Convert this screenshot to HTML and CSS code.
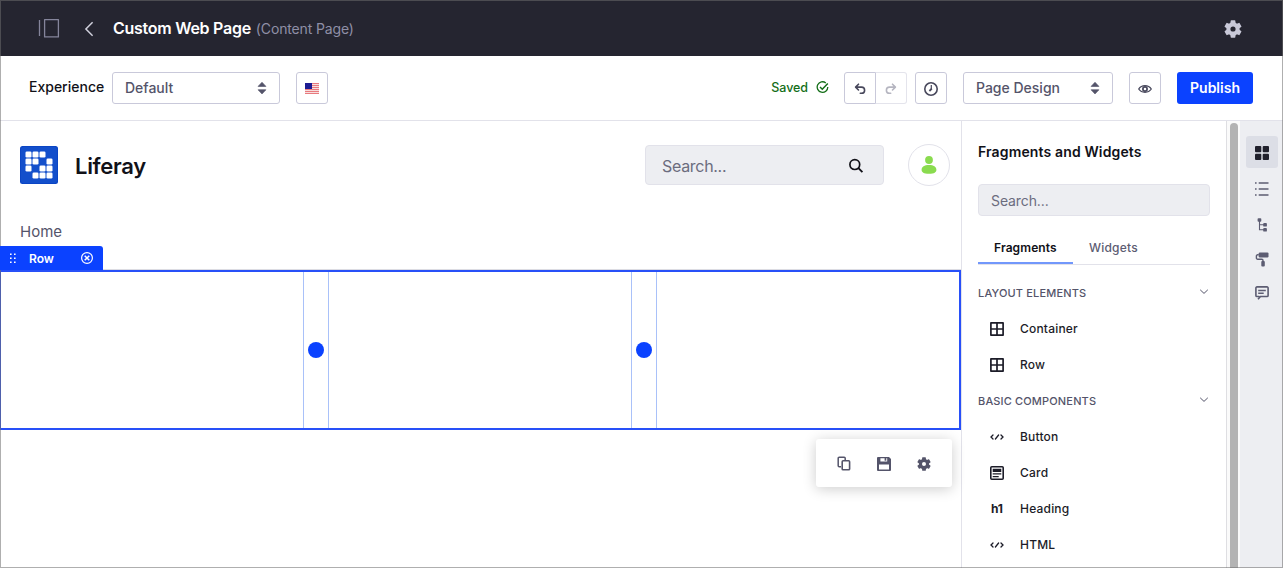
FILE: index.html
```html
<!DOCTYPE html>
<html lang="en">
<head>
<meta charset="utf-8">
<title>Custom Web Page</title>
<link rel="stylesheet" href="styles.css">
</head>
<body>
<svg class="defs" aria-hidden="true">
  <symbol id="gear" viewBox="0 0 16 16">
    <circle cx="8" cy="8" r="4.1" fill="none" stroke="currentColor" stroke-width="3.6"/>
    <g fill="currentColor">
      <path d="M6.500.3h3a.6.6 0 0 1 .6.6l.3 3H5.600l.3-3a.6.6 0 0 1 .6-.6zM6.500 15.700h3a.6.6 0 0 0 .6-.6l.3-3H5.600l.3 3a.6.6 0 0 0 .6.6z"/>
      <path d="M6.500.3h3a.6.6 0 0 1 .6.6l.3 3H5.600l.3-3a.6.6 0 0 1 .6-.6zM6.500 15.700h3a.6.6 0 0 0 .6-.6l.3-3H5.600l.3 3a.6.6 0 0 0 .6.6z" transform="rotate(60 8 8)"/>
      <path d="M6.500.3h3a.6.6 0 0 1 .6.6l.3 3H5.600l.3-3a.6.6 0 0 1 .6-.6zM6.500 15.700h3a.6.6 0 0 0 .6-.6l.3-3H5.600l.3 3a.6.6 0 0 0 .6.6z" transform="rotate(120 8 8)"/>
    </g>
  </symbol>
  <symbol id="caret" viewBox="0 0 10 14"><path d="M5 1.300 8.900 5.400H1.100zM5 12.900 1.100 8.800h7.800z" fill="currentColor" stroke="currentColor" stroke-width=".7" stroke-linejoin="round"/></symbol>
  <symbol id="undo" viewBox="0 0 12 12"><path d="M4.500 1.200 1.600 4.100l2.900 2.900M2 4.100h5.500a3 3 0 0 1 0 6.200H6.300" fill="none" stroke="currentColor" stroke-width="1.600" stroke-linecap="round" stroke-linejoin="round"/></symbol>
  <symbol id="grid" viewBox="0 0 14 14"><path d="M.9.9h12.200v12.200H.9zM7 1v12M1 7h12" fill="none" stroke="currentColor" stroke-width="1.700" stroke-linejoin="round"/></symbol>
  <symbol id="code" viewBox="0 0 14 8"><path d="M3 2 1 4l2 2M11 2l2 2-2 2M5.400 6l3.200-4" fill="none" stroke="currentColor" stroke-width="1.300" stroke-linecap="round"/></symbol>
  <symbol id="chevron" viewBox="0 0 10 6"><path d="M1.200.8 5 4.400 8.800.8" fill="none" stroke="currentColor" stroke-width="1"/></symbol>
</svg>
<div class="app">
  <header class="topbar">
    <svg class="panel-icon" viewBox="0 0 22 20"><path d="M1.500 1v16M6.600.7h13.800v17.200H6.600z" fill="none" stroke="currentColor" stroke-width="1.300" stroke-linejoin="round"/></svg>
    <svg class="back-icon" viewBox="0 0 10 16"><path d="M8.600 1.200 1.900 8l6.700 6.800" fill="none" stroke="currentColor" stroke-width="1.500"/></svg>
    <h1 class="page-title">Custom Web Page</h1>
    <span class="page-type">(Content Page)</span>
    <svg class="top-gear"><use href="#gear"/></svg>
  </header>

  <div class="toolbar">
    <span class="label">Experience</span>
    <div class="select select-exp"><span>Default</span><svg class="caret"><use href="#caret"/></svg></div>
    <button class="btn flag-btn">
      <svg width="14" height="11" viewBox="0 0 14 11"><rect width="14" height="11" fill="#f7dede"/><path d="M0 .5h14M0 2.500h14M0 4.500h14M0 6.500h14M0 8.500h14M0 10.500h14" stroke="#e87a7e"/><rect width="7" height="6" fill="#1c1c92"/></svg>
    </button>
    <div class="saved"><span>Saved</span>
      <svg width="13" height="13" viewBox="0 0 13 13"><path d="M9.800 1.900A5.300 5.300 0 1 0 11.800 6" fill="none" stroke="currentColor" stroke-width="1.300"/><path d="M4 6 6.300 8.300 11.800 2.500" fill="none" stroke="currentColor" stroke-width="1.500"/></svg>
    </div>
    <div class="history">
      <button class="btn undo"><svg width="12" height="12"><use href="#undo"/></svg></button>
      <button class="btn redo"><svg width="12" height="12"><use href="#undo"/></svg></button>
    </div>
    <button class="btn clock-btn"><svg width="16" height="16" viewBox="0 0 16 16"><circle cx="8" cy="8" r="6.200" fill="none" stroke="currentColor" stroke-width="1.600"/><path d="M8.300 4v4.200" stroke="currentColor" stroke-width="1.200"/><path d="M8.800 7.600 6.400 10" stroke="currentColor" stroke-width="1.800"/></svg></button>
    <div class="select select-design"><span>Page Design</span><svg class="caret"><use href="#caret"/></svg></div>
    <button class="btn eye-btn"><svg width="14" height="10" viewBox="0 0 14 10"><path d="M.7 5C3.600.6 10.400.6 13.300 5 10.400 9.400 3.600 9.400.7 5z" fill="none" stroke="currentColor" stroke-width="1.300"/><circle cx="7" cy="5" r="2.100" fill="none" stroke="currentColor" stroke-width="1.700"/></svg></button>
    <button class="publish">Publish</button>
  </div>

  <div class="workspace">
    <main class="canvas">
      <div class="site-header">
        <svg class="logo" viewBox="0 0 38 38"><rect width="38" height="38" rx="2.500" fill="#0b45c4"/><rect x="1" y="1" width="36" height="36" rx="2" fill="#134fcb"/>
          <g fill="#fff"><rect x="5.500" y="5.500" width="6" height="6" rx="1.300"/><rect x="12.500" y="5.500" width="6" height="6" rx="1.300"/><rect x="19.500" y="5.500" width="6" height="6" rx="1.300"/><rect x="5.500" y="12.500" width="6" height="6" rx="1.300"/><rect x="12.500" y="12.500" width="6" height="6" rx="1.300"/><rect x="26.500" y="12.500" width="6" height="6" rx="1.300"/><rect x="5.500" y="19.500" width="6" height="6" rx="1.300"/><rect x="19.500" y="19.500" width="6" height="6" rx="1.300"/><rect x="26.500" y="19.500" width="6" height="6" rx="1.300"/><rect x="12.500" y="26.500" width="6" height="6" rx="1.300"/><rect x="19.500" y="26.500" width="6" height="6" rx="1.300"/><rect x="26.500" y="26.500" width="6" height="6" rx="1.300"/></g></svg>
        <span class="brand">Liferay</span>
        <div class="site-search"><span>Search...</span><svg width="16" height="16" viewBox="0 0 16 16"><circle cx="6.800" cy="6.600" r="4.900" fill="none" stroke="#111118" stroke-width="1.700"/><path d="m10.400 10.200 4 4" stroke="#111118" stroke-width="1.900"/></svg></div>
        <div class="avatar"><svg width="16" height="18" viewBox="0 0 16 18"><circle cx="8" cy="4" r="3.900" fill="#8adb4f"/><path d="M.6 13.800C.6 10.800 3.400 9 8 9s7.400 1.800 7.400 4.800c0 2.500-2 4-7.400 4s-7.400-1.500-7.400-4z" fill="#8adb4f"/></svg></div>
      </div>
      <nav class="site-nav">Home</nav>
      <div class="row-tab">
        <svg width="8" height="12" viewBox="0 0 8 12" fill="#fff"><path d="M1 1.500h1.600v1.600H1zM5 1.500h1.600v1.600H5zM1 5.500h1.600v1.600H1zM5 5.500h1.600v1.600H5zM1 9.500h1.600v1.600H1zM5 9.500h1.600v1.600H5z"/></svg>
        <span>Row</span>
        <svg class="close" width="12" height="12" viewBox="0 0 12 12"><circle cx="6" cy="6" r="5.400" fill="none" stroke="#fff" stroke-width="1.200"/><path d="m3.700 3.700 4.600 4.600M8.300 3.700 3.700 8.300" stroke="#fff" stroke-width="1.500"/></svg>
      </div>
      <section class="row-box">
        <div class="col"></div><div class="gutter"><i class="handle"></i></div>
        <div class="col"></div><div class="gutter"><i class="handle"></i></div>
        <div class="col"></div>
      </section>
      <div class="floating">
        <svg width="14" height="16" viewBox="0 0 14 16"><path d="M4 10.700H2.200a1 1 0 0 1-1-1V2.200a1 1 0 0 1 1-1h5a1 1 0 0 1 1 1V4" fill="none" stroke="currentColor" stroke-width="1.500"/><rect x="5.200" y="4.800" width="7.400" height="9" rx=".9" fill="none" stroke="currentColor" stroke-width="1.600"/></svg>
        <svg width="14" height="14" viewBox="0 0 14 14"><path d="M1 0h11l2 2v11a1 1 0 0 1-1 1H1a1 1 0 0 1-1-1V1a1 1 0 0 1 1-1z" fill="currentColor"/><path d="M3.400 1.300h6.800v3.200H3.400zM2 7.600h10v5H2z" fill="#fff"/><path d="M7.600.8h1.700v2.900H7.600z" fill="currentColor"/></svg>
        <svg width="14" height="14"><use href="#gear"/></svg>
      </div>
    </main>

    <aside class="panel">
      <h2 class="panel-title">Fragments and Widgets</h2>
      <div class="panel-search">Search...</div>
      <div class="tabs"><span class="tab active">Fragments</span><span class="tab">Widgets</span></div>
      <div class="group">LAYOUT ELEMENTS<svg width="10" height="6"><use href="#chevron"/></svg></div>
      <div class="item"><svg width="14" height="14"><use href="#grid"/></svg>Container</div>
      <div class="item"><svg width="14" height="14"><use href="#grid"/></svg>Row</div>
      <div class="group">BASIC COMPONENTS<svg width="10" height="6"><use href="#chevron"/></svg></div>
      <div class="item"><svg width="14" height="8"><use href="#code"/></svg>Button</div>
      <div class="item"><svg width="14" height="14" viewBox="0 0 14 14"><rect x=".8" y=".8" width="12.400" height="12.400" rx="1" fill="none" stroke="currentColor" stroke-width="1.600"/><path d="M2.700 2.800h8.600V6H2.700zM2.700 7.300h8.600v1.300H2.700zM2.700 9.900h6v1.300h-6z" fill="currentColor"/></svg>Card</div>
      <div class="item"><b class="h1-icon">h1</b>Heading</div>
      <div class="item"><svg width="14" height="8"><use href="#code"/></svg>HTML</div>
    </aside>
    <div class="scroll"><div class="thumb"></div></div>
    <nav class="rail">
      <span class="rail-item selected"><svg width="14" height="14" viewBox="0 0 14 14" fill="#20202c"><rect width="6.300" height="6.300" rx="1"/><rect x="7.700" width="6.300" height="6.300" rx="1"/><rect y="7.700" width="6.300" height="6.300" rx="1"/><rect x="7.700" y="7.700" width="6.300" height="6.300" rx="1"/></svg></span>
      <span class="rail-item spaced"><svg width="14" height="16" viewBox="0 0 14 16"><path d="M0 2h1.600M0 8h1.600M0 14h1.600M3.700 2H13.500M3.700 8H13.500M3.700 14H13.500" stroke="currentColor" stroke-width="1.400"/></svg></span>
      <span class="rail-item spaced"><svg width="14" height="14" viewBox="0 0 14 14"><path d="M4.500 2v9.800H10M4.500 6.800H10" fill="none" stroke="currentColor" stroke-width="1.100"/><rect x="2.600" y=".2" width="3.700" height="3.500" rx=".9" fill="currentColor"/><rect x="8.200" y="5" width="3.700" height="3.600" rx=".9" fill="currentColor"/><rect x="8.200" y="10" width="3.700" height="3.600" rx=".9" fill="currentColor"/></svg></span>
      <span class="rail-item"><svg width="14" height="15" viewBox="0 0 14 15"><rect x="3.700" y=".4" width="9.800" height="5" rx="1.200" fill="currentColor"/><path d="M3.800 2.800H2.600A1.200 1.200 0 0 0 1.400 4v2a1.200 1.200 0 0 0 1.200 1.200H6.800A1.200 1.200 0 0 1 8 8.400V10" fill="none" stroke="currentColor" stroke-width="1.400"/><rect x="6.300" y="9" width="3.500" height="5.500" rx=".9" fill="currentColor"/></svg></span>
      <span class="rail-item"><svg width="14" height="14" viewBox="0 0 14 14"><path d="M4.400 10.500H2a1.100 1.100 0 0 1-1.100-1.100V2A1.100 1.100 0 0 1 2 .9h10A1.100 1.100 0 0 1 13.100 2v7.400a1.100 1.100 0 0 1-1.100 1.100H5.500L3 13.300" fill="none" stroke="currentColor" stroke-width="1.600"/><path d="M3.200 4.500h7.600M3.200 7.200h5.500" stroke="currentColor" stroke-width="1.400"/></svg></span>
    </nav>
  </div>
</div>
</body>
</html>
```
FILE: styles.css
```css
* { box-sizing: border-box; }
body { margin: 0; font-family: Inter, "Liberation Sans", sans-serif; color: #111118; background: #fff; overflow: hidden; }
svg { flex: none; display: block; }
.defs { position: absolute; width: 0; height: 0; }
.app { position: relative; display: flex; flex-direction: column; width: 1283px; height: 568px; overflow: hidden; }
.app::after { content: ""; position: absolute; inset: 0; border: 1px solid rgba(110, 110, 110, .55); pointer-events: none; }

.topbar { display: flex; align-items: center; flex: none; height: 56px; padding: 2px 41px 0 38px; background: #252530; }
.panel-icon { width: 22px; height: 20px; color: #85859b; }
.back-icon { width: 10px; height: 16px; margin-left: 24px; color: #d0d0dc; }
.page-title { margin: 0 0 2px 19px; font-size: 16px; font-weight: 600; line-height: 20px; letter-spacing: -.27px; color: #fff; white-space: nowrap; }
.page-type { margin-left: 5px; font-size: 14px; line-height: 20px; letter-spacing: -.14px; color: #8f8fa6; white-space: nowrap; }
.top-gear { width: 18px; height: 18px; margin-left: auto; color: #c9c9d8; }

.toolbar { display: flex; align-items: center; flex: none; height: 65px; padding: 0 30px 1px 29px; border-bottom: 1px solid #e2e2ea; }
.label { width: 83px; padding-bottom: 2px; font-size: 14px; font-weight: 500; white-space: nowrap; }
.select { display: flex; align-items: center; justify-content: space-between; height: 32px; padding: 0 12px; border: 1px solid #c9c9da; border-radius: 3px; font-size: 14px; font-weight: 500; color: #54546a; white-space: nowrap; }
.select-exp { width: 168px; }
.select-design { width: 150px; margin-left: 16px; }
.caret { width: 10px; height: 14px; }
.btn { display: flex; align-items: center; justify-content: center; width: 32px; height: 32px; padding: 0; border: 1px solid #c9c9da; border-radius: 3px; background: #fff; color: #48485c; }
.flag-btn { margin-left: 16px; padding-top: 1px; }
.saved { display: flex; align-items: center; gap: 8px; margin-left: auto; margin-right: 15px; font-size: 12.5px; font-weight: 500; letter-spacing: -.05px; color: #146e18; }
.saved svg { margin-bottom: 1px; }
.history { display: flex; }
.undo { border-radius: 3px 0 0 3px; padding-top: 2px; }
.redo { width: 31px; padding-top: 2px; border-color: #e4e4ec; border-left: 0; border-radius: 0 3px 3px 0; color: #b5b5c0; }
.redo svg { transform: scaleX(-1); }
.clock-btn { margin-left: 8px; padding-top: 2px; }
.eye-btn { margin-left: 16px; padding-top: 2px; }
.publish { width: 76px; height: 32px; margin-left: 16px; padding: 0; border: 0; border-radius: 3px; background: #0b42ff; color: #fff; font: 600 14px Inter, sans-serif; }

.workspace { display: flex; flex: 1; min-height: 0; }
.canvas { position: relative; width: 961px; flex: none; }
.site-header { display: flex; align-items: center; height: 88px; padding: 0 11px 0 20px; }
.logo { width: 38px; height: 38px; }
.brand { margin: 1px 0 0 17px; font-size: 22px; font-weight: 600; line-height: 28px; letter-spacing: -.3px; }
.site-search { display: flex; align-items: center; justify-content: space-between; width: 239px; height: 40px; margin-left: auto; padding: 1px 19px 0 16px; border: 1px solid #e2e2ea; border-radius: 4px; background: #edeef2; font-size: 16px; letter-spacing: -.3px; color: #6b6c7e; }
.site-search svg { margin-top: 1px; }
.avatar { display: flex; align-items: center; justify-content: center; width: 42px; height: 42px; margin-left: 24px; border: 1px solid #e2e2ea; border-radius: 50%; }
.site-nav { height: 37px; padding: 13px 20px 0; font-size: 15px; line-height: 20px; color: #54546a; }
.row-tab { position: relative; z-index: 1; display: flex; align-items: center; width: 103px; height: 24px; padding: 0 10px 0 9px; border-radius: 0 3px 0 0; background: #0b42ff; color: #fff; font-size: 12px; font-weight: 600; }
.row-tab span { margin-left: 12px; }
.close { margin-left: auto; }
.row-box { display: flex; height: 160px; border: 2px solid #2850f8; border-left-width: 1px; box-shadow: 0 -1px 0 #dcdce2; }
.col { flex: 1; }
.gutter { display: flex; align-items: center; justify-content: center; width: 26px; border: 1px solid #a9c1f9; border-width: 0 1px; }
.handle { width: 16px; height: 16px; border-radius: 50%; background: #0b42ff; }
.floating { position: absolute; right: 9px; bottom: 81px; display: flex; align-items: center; justify-content: space-between; width: 136px; height: 48px; padding: 2px 21px 0; border-radius: 3px; background: #fff; color: #54546a; box-shadow: 0 2px 14px rgba(0, 0, 0, .2); }

.panel { width: 265px; flex: none; padding: 21px 16px 0; border-left: 1px solid #e2e2ea; }
.panel-title { margin: 0 0 23px; font-size: 14px; font-weight: 600; line-height: 19px; letter-spacing: .14px; white-space: nowrap; }
.panel-search { height: 32px; padding: 0 12px; border: 1px solid #e2e2ea; border-radius: 4px; background: #edeef2; font-size: 14px; line-height: 32px; letter-spacing: -.1px; color: #6b6c7e; }
.tabs { display: flex; height: 49px; padding-top: 16px; border-bottom: 1px solid #e2e2ea; font-size: 12px; font-weight: 500; line-height: 31px; letter-spacing: .2px; color: #5c5c72; }
.tab { height: 32px; padding: 0 16px; }
.active { width: 95px; border-bottom: 2px solid #7297fb; color: #111118; font-weight: 600; letter-spacing: .1px; }
.group { display: flex; align-items: center; justify-content: space-between; height: 36px; padding-right: 1px; font-size: 11px; font-weight: 500; color: #54546a; letter-spacing: .16px; }
.group svg { margin-bottom: 2px; }
.tabs + .group { margin-top: 10px; }
.item { display: flex; align-items: center; height: 36px; padding: 0 0 2px 12px; font-size: 12px; font-weight: 500; letter-spacing: .2px; color: #1c1c28; }
.item svg { margin: 2px 16px 0 0; }
.h1-icon { width: 14px; margin-right: 16px; padding-left: 1px; font-size: 12px; font-weight: 700; letter-spacing: -.3px; }

.scroll { width: 14px; flex: none; padding: 2px 2px 0 3px; border-left: 1px solid #dedee2; background: #fafafa; }
.thumb { width: 8px; height: 460px; border-radius: 4px; background: #b3b3b3; }
.rail { display: flex; flex: 1; flex-direction: column; padding: 15px 5px 0 6px; background: #edeef2; color: #5c5c72; }
.rail-item { display: flex; align-items: center; justify-content: center; width: 32px; height: 32px; margin-bottom: 2px; padding-top: 2px; }
.selected, .spaced { margin-bottom: 4px; }
.spaced + .spaced { margin-bottom: 2px; }
.selected { border-radius: 3px; background: #dcdee6; }
```
